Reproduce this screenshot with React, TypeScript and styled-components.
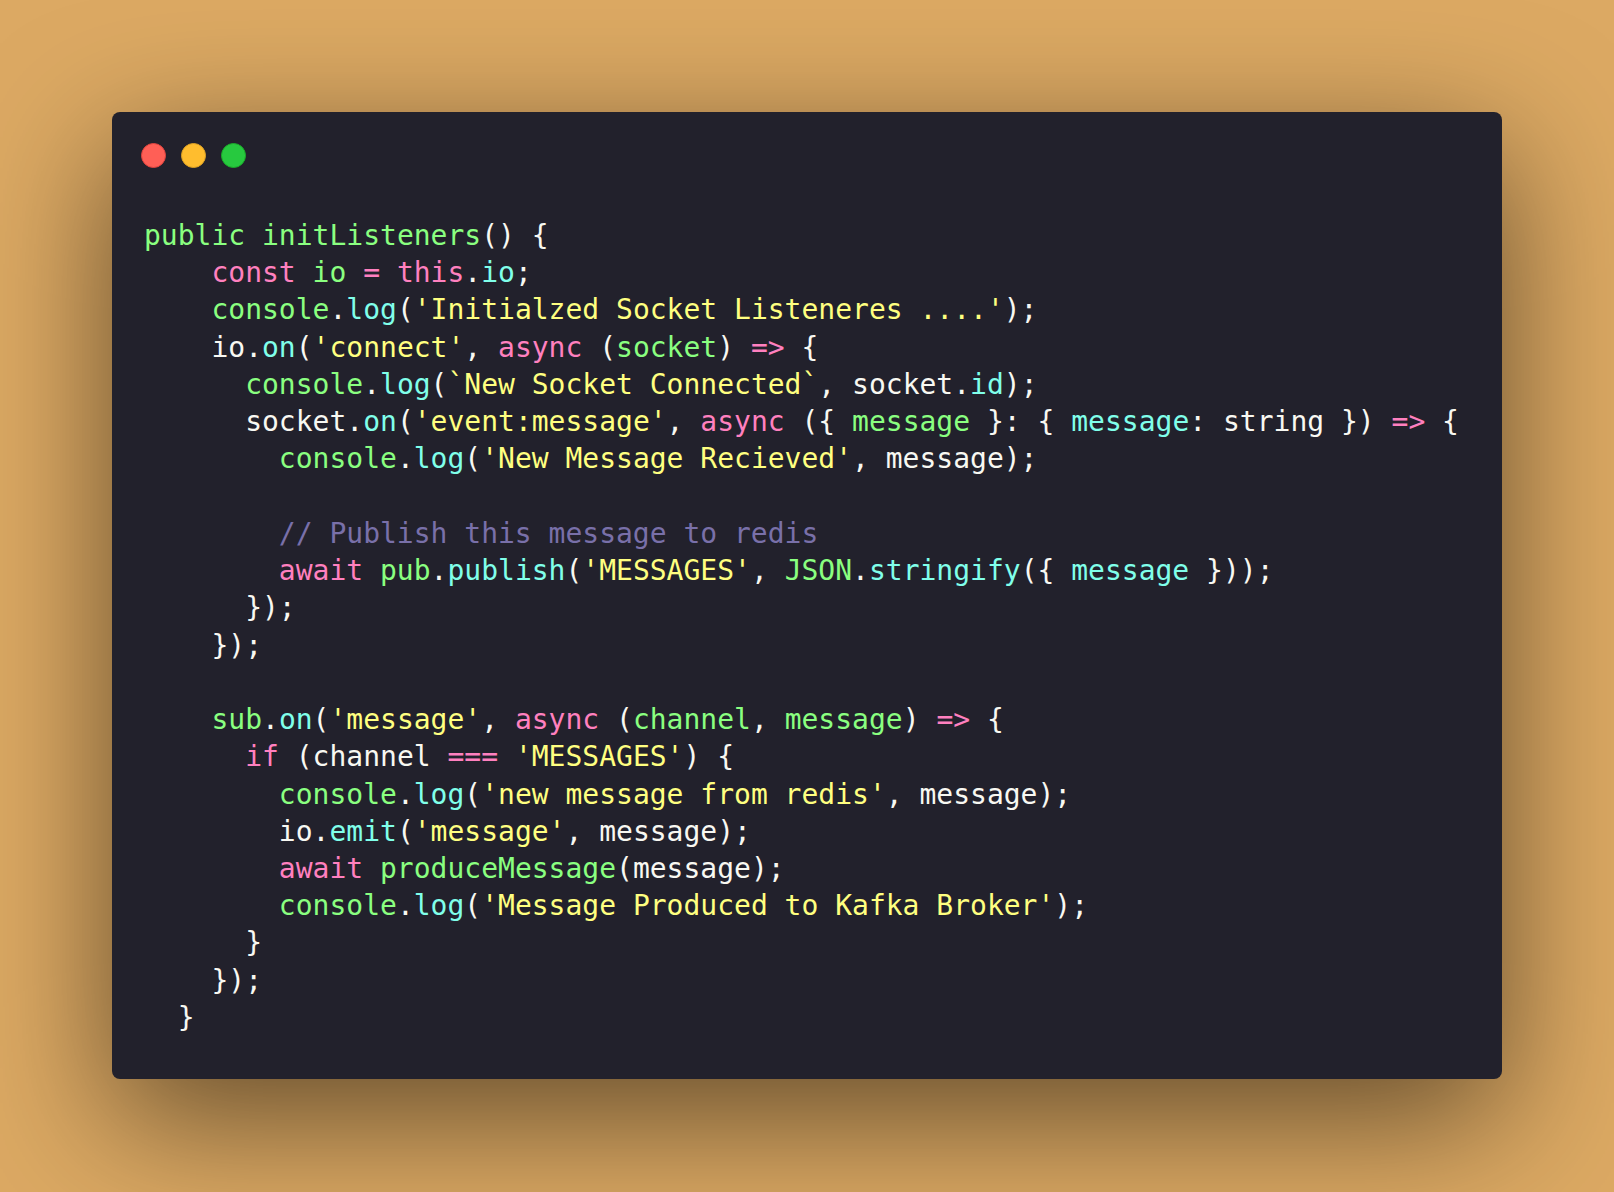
import React from "react";
import styled, { createGlobalStyle } from "styled-components";

const Global = createGlobalStyle`
  html, body { margin: 0; padding: 0; background: #dca963; }
  * { box-sizing: border-box; }
`;

const Page = styled.div`
  width: 1614px;
  min-height: 1192px;
  padding: 112px;
  background: #dca963;
`;

const Window = styled.div`
  width: 1390px;
  background: #22212c;
  border-radius: 8px;
  box-shadow: 0 40px 136px rgba(0, 0, 0, 0.55);
  padding: 31px 30px 43px 32px;
`;

const Controls = styled.div`
  display: flex;
  gap: 15px;
  height: 25px;
  margin-left: -3.5px;
`;

const Dot = styled.span<{ $fill: string; $stroke: string }>`
  width: 25px;
  height: 25px;
  border-radius: 50%;
  background: ${(p) => p.$fill};
  border: 1px solid ${(p) => p.$stroke};
`;

const Code = styled.pre`
  margin: 49px 0 0 0;
  font-family: "DejaVu Sans Mono", "Liberation Mono", monospace;
  font-size: 28px;
  line-height: 133%;
  color: #f8f8f2;
  white-space: pre;
`;

const Line = styled.div`
  min-height: 1.33em;
`;

type Kind = "w" | "g" | "p" | "c" | "y" | "m";

const colors: Record<Kind, string> = {
  w: "#f8f8f2",
  g: "#8aff80",
  p: "#ff80bf",
  c: "#80ffea",
  y: "#ffff80",
  m: "#7970a9",
};

const Tok = styled.span<{ $k: Kind }>`
  color: ${(p) => colors[p.$k]};
`;

type T = [Kind, string];

const lines: T[][] = [
  [["g", "public"], ["w", " "], ["g", "initListeners"], ["w", "() {"]],
  [["w", "    "], ["p", "const"], ["w", " "], ["g", "io"], ["w", " "], ["p", "="], ["w", " "], ["p", "this"], ["w", "."], ["c", "io"], ["w", ";"]],
  [["w", "    "], ["g", "console"], ["w", "."], ["c", "log"], ["w", "("], ["y", "'Initialzed Socket Listeneres ....'"], ["w", ");"]],
  [["w", "    io."], ["c", "on"], ["w", "("], ["y", "'connect'"], ["w", ", "], ["p", "async"], ["w", " ("], ["g", "socket"], ["w", ") "], ["p", "=>"], ["w", " {"]],
  [["w", "      "], ["g", "console"], ["w", "."], ["c", "log"], ["w", "("], ["y", "`New Socket Connected`"], ["w", ", socket."], ["c", "id"], ["w", ");"]],
  [["w", "      socket."], ["c", "on"], ["w", "("], ["y", "'event:message'"], ["w", ", "], ["p", "async"], ["w", " ({ "], ["g", "message"], ["w", " }: { "], ["c", "message"], ["w", ": string }) "], ["p", "=>"], ["w", " {"]],
  [["w", "        "], ["g", "console"], ["w", "."], ["c", "log"], ["w", "("], ["y", "'New Message Recieved'"], ["w", ", message);"]],
  [],
  [["w", "        "], ["m", "// Publish this message to redis"]],
  [["w", "        "], ["p", "await"], ["w", " "], ["g", "pub"], ["w", "."], ["c", "publish"], ["w", "("], ["y", "'MESSAGES'"], ["w", ", "], ["g", "JSON"], ["w", "."], ["c", "stringify"], ["w", "({ "], ["c", "message"], ["w", " }));"]],
  [["w", "      });"]],
  [["w", "    });"]],
  [],
  [["w", "    "], ["g", "sub"], ["w", "."], ["c", "on"], ["w", "("], ["y", "'message'"], ["w", ", "], ["p", "async"], ["w", " ("], ["g", "channel"], ["w", ", "], ["g", "message"], ["w", ") "], ["p", "=>"], ["w", " {"]],
  [["w", "      "], ["p", "if"], ["w", " (channel "], ["p", "==="], ["w", " "], ["y", "'MESSAGES'"], ["w", ") {"]],
  [["w", "        "], ["g", "console"], ["w", "."], ["c", "log"], ["w", "("], ["y", "'new message from redis'"], ["w", ", message);"]],
  [["w", "        io."], ["c", "emit"], ["w", "("], ["y", "'message'"], ["w", ", message);"]],
  [["w", "        "], ["p", "await"], ["w", " "], ["g", "produceMessage"], ["w", "(message);"]],
  [["w", "        "], ["g", "console"], ["w", "."], ["c", "log"], ["w", "("], ["y", "'Message Produced to Kafka Broker'"], ["w", ");"]],
  [["w", "      }"]],
  [["w", "    });"]],
  [["w", "  }"]],
];

export default function App() {
  return (
    <>
      <Global />
      <Page>
        <Window>
          <Controls>
            <Dot $fill="#ff5f56" $stroke="#e0443e" />
            <Dot $fill="#ffbd2e" $stroke="#dea123" />
            <Dot $fill="#27c93f" $stroke="#1aab29" />
          </Controls>
          <Code>
            {lines.map((l, i) => (
              <Line key={i}>
                {l.map(([k, t], j) => (
                  <Tok key={j} $k={k}>
                    {t}
                  </Tok>
                ))}
              </Line>
            ))}
          </Code>
        </Window>
      </Page>
    </>
  );
}
